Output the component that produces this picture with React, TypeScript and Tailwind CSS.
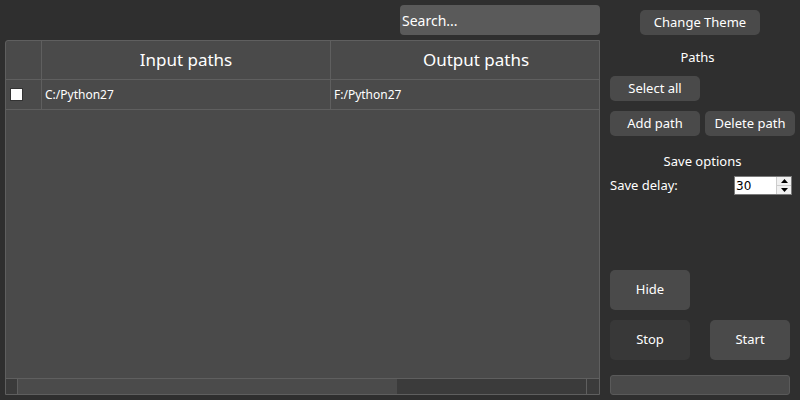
const font = { fontFamily: '"Noto Sans", "Open Sans", sans-serif' };

const Btn = ({ label, className }: { label: string; className: string }) => (
  <button className={`rounded-[5px] text-[13px] text-white flex items-center justify-center shrink-0 ${className}`}>
    {label}
  </button>
);

export default function App() {
  return (
    <div className="w-[800px] h-[400px] bg-[#2f2f2f] flex text-white overflow-hidden" style={font}>
      <div className="w-[600px] shrink-0 pl-[5px] pt-[5px] flex flex-col">
        <div className="flex justify-end">
          <div className="w-[200px] h-[30px] bg-[#5a5a5a] rounded-[4px] flex items-center pl-[2px] text-[14px]">
            Search...
          </div>
        </div>
        <div className="mt-[5px] h-[355px] border border-[#5f5f5f] rounded-tl-[3px] bg-[#4a4a4a] flex flex-col overflow-hidden">
          <div className="flex h-[39px] shrink-0 border-b border-[#5f5f5f] text-[17px]">
            <div className="w-[36px] shrink-0 border-r border-[#5f5f5f]" />
            <div className="w-[289px] shrink-0 border-r border-[#5f5f5f] flex items-center justify-center">Input paths</div>
            <div className="w-[290px] shrink-0 flex items-center justify-center">Output paths</div>
          </div>
          <div className="flex h-[30px] shrink-0 border-b border-[#5f5f5f] text-[12px]">
            <div className="w-[36px] shrink-0 border-r border-[#5f5f5f] flex items-center pl-[4px]">
              <div className="w-[13px] h-[13px] bg-white border border-[#333]" />
            </div>
            <div className="w-[289px] shrink-0 border-r border-[#5f5f5f] flex items-center pl-[3px]">C:/Python27</div>
            <div className="w-[290px] shrink-0 flex items-center pl-[3px]">F:/Python27</div>
          </div>
          <div className="flex-1" />
          <div className="h-[16px] shrink-0 border-t border-[#5f5f5f] flex">
            <div className="w-[12px] bg-[#3b3b3b] border-r border-[#5f5f5f]" />
            <div className="w-[379px] bg-[#4b4b4b]" />
            <div className="flex-1 bg-[#3b3b3b] border-r border-[#5f5f5f]" />
            <div className="w-[12px] bg-[#3b3b3b]" />
          </div>
        </div>
      </div>

      <div className="w-[200px] pl-[10px] pr-[5px] flex flex-col">
        <div className="mt-[10px] flex justify-center pr-[5px]">
          <Btn label="Change Theme" className="w-[120px] h-[25px] bg-[#4a4a4a]" />
        </div>
        <div className="mt-[12px] text-[13px] text-center leading-[20px] pr-[10px]">Paths</div>
        <Btn label="Select all" className="mt-[9px] w-[90px] h-[25px] bg-[#4a4a4a]" />
        <div className="mt-[10px] flex gap-[5px]">
          <Btn label="Add path" className="w-[90px] h-[25px] bg-[#4a4a4a]" />
          <Btn label="Delete path" className="w-[90px] h-[25px] bg-[#4a4a4a]" />
        </div>
        <div className="mt-[15px] text-[13px] text-center leading-[20px]">Save options</div>
        <div className="mt-[5px] flex items-center justify-between pr-[3px]">
          <span className="text-[13px]">Save delay:</span>
          <div className="w-[58px] h-[19px] bg-white border border-[#7a7a7a] flex items-center">
            <span className="flex-1 text-black text-[12px] pl-[1px]" style={{ fontFamily: '"DejaVu Sans", sans-serif' }}>30</span>
            <div className="w-[15px] h-full flex flex-col border-l border-[#ccc] bg-[#f0f0f0]">
              <div className="flex-1 flex items-center justify-center border-b border-[#ccc]">
                <svg width="7" height="4" viewBox="0 0 7 4"><path d="M0 4 L3.5 0 L7 4 Z" fill="#000" /></svg>
              </div>
              <div className="flex-1 flex items-center justify-center">
                <svg width="7" height="4" viewBox="0 0 7 4"><path d="M0 0 L3.5 4 L7 0 Z" fill="#000" /></svg>
              </div>
            </div>
          </div>
        </div>
        <Btn label="Hide" className="mt-[74px] w-[80px] h-[40px] bg-[#4a4a4a]" />
        <div className="mt-[10px] flex justify-between w-[180px]">
          <Btn label="Stop" className="w-[80px] h-[40px] bg-[#383838]" />
          <Btn label="Start" className="w-[80px] h-[40px] bg-[#4a4a4a]" />
        </div>
        <div className="mt-[15px] w-[180px] h-[20px] rounded-[3px] bg-[#4a4a4a] border border-[#5a5a5a]" />
      </div>
    </div>
  );
}
